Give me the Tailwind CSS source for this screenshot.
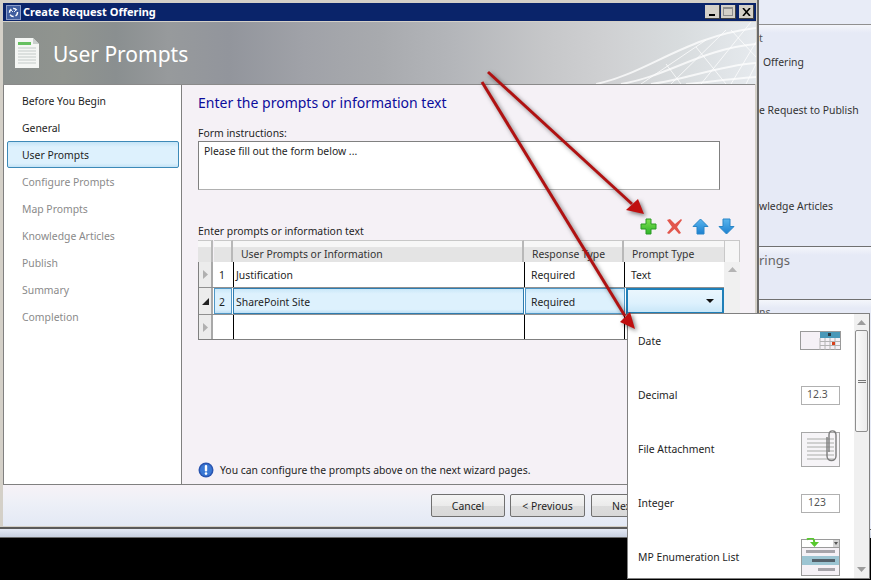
<!DOCTYPE html>
<html lang="en">
<head>
<meta charset="UTF-8">
<title>Create Request Offering</title>
<script src="https://cdn.jsdelivr.net/npm/@tailwindcss/browser@4"></script>
</head>
<body class="bg-black">
<div class="relative w-[871px] h-[580px] overflow-hidden bg-black font-['Noto_Sans',sans-serif] text-[10.4px] text-[#1e1e1e]">

  <div class="flex h-[538px]">
    <div class="w-[759px] h-[538px] shrink-0 flex flex-col border-r-2 border-b border-[#6a6a6a]">
      <!-- wizard window -->
      <div class="h-[529px] shrink-0 flex flex-col bg-[#d4d0c8] border-b-2 border-[#5a5a5a] pl-[3px] pt-[3px] pr-[1px] pb-[1px]">
        <div class="h-[18px] bg-[#0a246a] flex items-center justify-between pl-[3px] pr-[2px] shrink-0">
          <div class="flex items-center gap-[2px]">
            <svg width="15" height="15" viewBox="0 0 15 15"><rect x="0.5" y="0.5" width="14" height="14" fill="#3f5d9f" stroke="#8a9cc8"/><circle cx="7.5" cy="7.5" r="4" fill="none" stroke="#fff" stroke-width="1.5" stroke-dasharray="4 2"/><path d="M4 4l3 3M11 4l-3 3" stroke="#dfe6f5"/></svg>
            <span class="text-white font-bold text-[11px] leading-none mb-[2px]">Create Request Offering</span>
          </div>
          <div class="flex gap-px items-center">
            <div class="w-[15px] h-[14px] bg-[#d4d0c8] border-r border-b border-[#404040] flex items-end justify-center pb-[2px]"><div class="w-[6px] h-[2px] bg-black"></div></div>
            <div class="w-[15px] h-[14px] bg-[#d4d0c8] border-r border-b border-[#404040] flex items-center justify-center"><div class="w-[10px] h-[9px] border border-[#8e8e8e] border-t-2"></div></div>
            <div class="w-[15px] h-[14px] ml-[2px] bg-[#d4d0c8] border-r border-b border-[#404040] flex items-center justify-center">
              <svg width="9" height="8" viewBox="0 0 9 8"><path d="M1 0l7 8M8 0l-7 8" stroke="#000" stroke-width="1.6"/></svg>
            </div>
          </div>
        </div>

        <div class="relative h-[62px] mt-[1px] shrink-0 flex items-center overflow-hidden bg-[linear-gradient(90deg,#8b908e_0%,#90948f_8%,#8a8f90_15%,#979a9c_22%,#92959c_30%,#a0a2a8_40%,#a8aaae_50%,#b4b6ba_60%,#c6c7c9_72%,#cfd0d2_80%,#d8dcde_90%,#e6eaee_100%)]">
          <svg class="absolute right-0 top-0" width="160" height="62" viewBox="0 0 160 62" fill="none" stroke="#fff" stroke-opacity="0.75">
            <path d="M0 62C50 52 90 14 160 6" stroke-width="2"/>
            <path d="M25 62C70 55 105 27 160 22" stroke-width="2"/>
            <path d="M55 62C90 58 120 44 160 41" stroke-width="2"/>
            <path d="M90 62C115 60 140 56 160 55" stroke-width="2"/>
            <path d="M155 0L105 62M130 8L75 62M110 18L45 62M160 20L135 62M160 42L150 62"/>
            <path d="M100 25L130 62M70 42L85 62M135 8L160 35"/>
          </svg>
          <svg class="ml-[12px] mt-[-2px]" width="24" height="31" viewBox="0 0 24 31"><path d="M0 1H18L24 7V31H0Z" fill="#f4f6f4"/><path d="M18 1L24 7H18Z" fill="#c9cfcc"/><rect x="3" y="5" width="13" height="3" fill="#66c060"/><path d="M3 11H21M3 14H21M3 17H21M3 20H21M3 23H21M3 26H21" stroke="#c3cac8"/></svg>
          <span class="ml-[14px] mt-[2px] text-[21px] text-white leading-none">User Prompts</span>
        </div>

        <div class="flex h-[401px] shrink-0 border-t border-[#8a8a8a] mr-px">
          <!-- step list -->
          <div class="w-[178px] shrink-0 bg-white border-l border-b border-[#808080] pt-[2px] pl-[3px] pr-[2px]">
            <div class="h-[27px] flex items-center pl-[15px] pt-[2px]">Before You Begin</div>
            <div class="h-[27px] flex items-center pl-[15px] pt-[2px]">General</div>
            <div class="h-[27px] flex items-center pl-[14px] pt-[2px] rounded-[2px] border border-[#3d8ab8] bg-[linear-gradient(180deg,#c4e4f7_0%,#ddf1fd_20%,#ddf1fd_85%,#c3e3f6_100%)]">User Prompts</div>
            <div class="h-[27px] flex items-center pl-[15px] pt-[2px] text-[#8a8a8a]">Configure Prompts</div>
            <div class="h-[27px] flex items-center pl-[15px] pt-[2px] text-[#8a8a8a]">Map Prompts</div>
            <div class="h-[27px] flex items-center pl-[15px] pt-[2px] text-[#8a8a8a]">Knowledge Articles</div>
            <div class="h-[27px] flex items-center pl-[15px] pt-[2px] text-[#8a8a8a]">Publish</div>
            <div class="h-[27px] flex items-center pl-[15px] pt-[2px] text-[#8a8a8a]">Summary</div>
            <div class="h-[27px] flex items-center pl-[15px] pt-[2px] text-[#8a8a8a]">Completion</div>
          </div>

          <!-- content -->
          <div class="flex-1 bg-[#f5f1f6] border-l border-b border-[#808080] pl-[16px] flex flex-col">
            <h1 class="mt-[8px] text-[14px] leading-[20px] text-[#0c0c9c]">Enter the prompts or information text</h1>
            <div class="mt-[13px] leading-[14px]">Form instructions:</div>
            <div class="mt-[1px] w-[522px] h-[49px] border border-[#808080] border-b-[#b0b0b0] bg-white px-[5px] pt-[2px]">Please fill out the form below ...</div>

            <div class="mt-[27px] h-[23px] w-[542px] flex items-end justify-between">
              <span class="leading-[14px] mb-[2px]">Enter prompts or information text</span>
              <div class="flex items-center gap-[9px] pr-[5px] mb-[5px]">
                <svg width="17" height="17" viewBox="0 0 17 17"><defs><linearGradient id="g" x1="0" y1="0" x2="0" y2="1"><stop offset="0" stop-color="#7fe04f"/><stop offset="1" stop-color="#2eb52a"/></linearGradient></defs><path d="M6 1H11V6H16V11H11V16H6V11H1V6H6Z" fill="url(#g)" stroke="#2a9a24" stroke-linejoin="round"/></svg>
                <svg width="17" height="17" viewBox="0 0 17 17"><path d="M1 2L4 1L9 6L15 1L16 2L11 9L15 15L13 16L8.500 11L3 16L1 15L6 9Z" fill="#e2564c"/></svg>
                <svg width="17" height="17" viewBox="0 0 17 17"><defs><linearGradient id="b" x1="0" y1="0" x2="0" y2="1"><stop offset="0" stop-color="#5bb6ee"/><stop offset="1" stop-color="#1c80d0"/></linearGradient></defs><path d="M8.500 1L16 8.500H12V16H5V8.500H1Z" fill="url(#b)" stroke="#2a86c8" stroke-linejoin="round"/></svg>
                <svg width="17" height="17" viewBox="0 0 17 17"><path d="M8.500 16L16 8.500H12V1H5V8.500H1Z" fill="url(#b)" stroke="#2a86c8" stroke-linejoin="round"/></svg>
              </div>
            </div>

            <!-- grid -->
            <div class="w-[542px] h-[100px] flex flex-col relative">
              <div class="flex h-[22px] shrink-0">
                <div class="w-[15px] border-r-2 border-[#b8b8b8] bg-[linear-gradient(180deg,#f7f7f7_0%,#f7f7f7_30%,#e4e4e4_31%,#e4e4e4_100%)] border-t border-t-[#c8c8c8]"></div>
                <div class="w-[19px] ml-px border-r-2 border-[#b8b8b8] bg-[linear-gradient(180deg,#f7f7f7_0%,#f7f7f7_30%,#e4e4e4_31%,#e4e4e4_100%)] border-t border-t-[#c8c8c8]"></div>
                <div class="w-[291px] border-r-2 border-[#b8b8b8] bg-[linear-gradient(180deg,#f7f7f7_0%,#f7f7f7_30%,#e4e4e4_31%,#e4e4e4_100%)] border-t border-t-[#c8c8c8] pl-[8px] pt-[6px] leading-[14px] text-[#333]">User Prompts or Information</div>
                <div class="w-[100px] border-r-2 border-[#b8b8b8] bg-[linear-gradient(180deg,#f7f7f7_0%,#f7f7f7_30%,#e4e4e4_31%,#e4e4e4_100%)] border-t border-t-[#c8c8c8] pl-[8px] pt-[6px] leading-[14px] text-[#333]">Response Type</div>
                <div class="w-[100px] bg-[linear-gradient(180deg,#f7f7f7_0%,#f7f7f7_30%,#e4e4e4_31%,#e4e4e4_100%)] border-t border-t-[#c8c8c8] pl-[8px] pt-[6px] leading-[14px] text-[#333]">Prompt Type</div>
                <div class="flex-1 bg-[#f6f6f6] border-t border-x border-[#c8c8c8]"></div>
              </div>
              <div class="flex flex-1">
                <div class="w-[526px] border-l border-b border-[#808080] bg-white flex flex-col">
                  <div class="flex h-[26px] border-b border-[#909090]">
                    <div class="w-[14px] bg-[#ececec] border-r-2 border-[#a8a8a8] flex items-center justify-center"><svg width="5" height="9" viewBox="0 0 5 9"><path d="M0 0L5 4.500L0 9Z" fill="#b0b0b0"/></svg></div>
                    <div class="w-[19px] pl-[5px] pt-[2px] flex items-center ml-px">1</div>
                    <div class="w-[291px] border-l border-black pl-[2px] pt-[2px] flex items-center">Justification</div>
                    <div class="w-[100px] border-l border-black pl-[6px] pt-[2px] flex items-center">Required</div>
                    <div class="w-[100px] border-l border-black pl-[6px] pt-[2px] flex items-center">Text</div>
                  </div>
                  <div class="flex h-[27px] border-b border-[#909090]">
                    <div class="w-[14px] bg-[#ececec] border-r-2 border-[#a8a8a8] flex items-center justify-center"><svg width="7" height="7" viewBox="0 0 7 7"><path d="M7 0V7H0Z" fill="#222"/></svg></div>
                    <div class="w-[18px] ml-[1px] pl-[4px] pt-[3px] flex items-center border border-[#4f97c6] bg-[linear-gradient(180deg,#c9e7f8_0%,#ddf1fd_20%,#ddf1fd_85%,#bfe0f4_100%)]">2</div>
                    <div class="w-[291px] ml-px border border-[#2e7cb0] pl-[2px] pt-[3px] flex items-center bg-[linear-gradient(180deg,#c9e7f8_0%,#ddf1fd_20%,#ddf1fd_85%,#bfe0f4_100%)]">SharePoint Site</div>
                    <div class="w-[100px] ml-px border border-[#4f97c6] pl-[5px] pt-[3px] flex items-center bg-[linear-gradient(180deg,#c9e7f8_0%,#ddf1fd_20%,#ddf1fd_85%,#bfe0f4_100%)]">Required</div>
                    <div class="w-[98px] ml-px border-2 border-[#1f7fb8] flex items-center justify-end pr-[8px] bg-[linear-gradient(180deg,#eaf6fd_0%,#ddf1fd_60%,#c9e7f8_100%)]"><svg width="8" height="4" viewBox="0 0 8 4"><path d="M0 0H8L4 4Z" fill="#111"/></svg></div>
                  </div>
                  <div class="flex flex-1">
                    <div class="w-[14px] bg-[#ececec] border-r-2 border-[#a8a8a8] flex items-center justify-center"><svg width="5" height="9" viewBox="0 0 5 9"><path d="M0 0L5 4.500L0 9Z" fill="#b0b0b0"/></svg></div>
                    <div class="w-[19px] ml-px"></div>
                    <div class="w-[291px] border-l border-black"></div>
                    <div class="w-[100px] border-l border-black"></div>
                    <div class="w-[100px] border-l border-black"></div>
                  </div>
                </div>
                <div class="flex-1 bg-[#f0f0f0] flex justify-center pt-[5px]"><svg width="9" height="5" viewBox="0 0 9 5"><path d="M0 5L4.500 0L9 5Z" fill="#b4b4b4"/></svg></div>
              </div>
            </div>

            <div class="mt-auto mb-[5px] flex items-center gap-[6px]">
              <svg width="16" height="16" viewBox="0 0 16 16"><circle cx="8" cy="8" r="7.500" fill="#2a55b0"/><circle cx="8" cy="8" r="6" fill="#3a78d4"/><rect x="6.800" y="3" width="2.400" height="6.500" rx="1" fill="#fff"/><circle cx="8" cy="11.600" r="1.300" fill="#fff"/></svg>
              <span class="mt-[2px]">You can configure the prompts above on the next wizard pages.</span>
            </div>
          </div>
        </div>

        <!-- footer -->
        <div class="flex-1 flex items-start justify-end gap-[5px] pt-[9px] pr-[91px] bg-[linear-gradient(180deg,#f6f2f7_0%,#eef0f7_40%,#e3e9f5_100%)]">
          <div class="w-[74px] h-[23px] pt-[2px] border border-[#707070] rounded-[2px] flex items-center justify-center bg-[linear-gradient(180deg,#f4f4f4_0%,#ebebeb_50%,#dcdcdc_51%,#d8d8d8_100%)]">Cancel</div>
          <div class="w-[75px] h-[23px] pt-[2px] mr-px border border-[#707070] rounded-[2px] flex items-center justify-center bg-[linear-gradient(180deg,#f4f4f4_0%,#ebebeb_50%,#dcdcdc_51%,#d8d8d8_100%)]">&lt; Previous</div>
          <div class="w-[74px] h-[23px] pt-[2px] pl-[20px] border border-[#707070] rounded-[2px] flex items-center bg-[linear-gradient(180deg,#f4f4f4_0%,#ebebeb_50%,#dcdcdc_51%,#d8d8d8_100%)]">Nex</div>
        </div>
      </div>
      <!-- strip of the application below the wizard -->
      <div class="flex-1 bg-[linear-gradient(180deg,#e4e9f4_0%,#c8d0e0_100%)]"></div>
    </div>

    <!-- application behind the wizard -->
    <div class="flex-1 bg-[#e6eaf6] flex flex-col overflow-hidden text-[#333]">
      <div class="h-[25px] border-b border-[#909090] bg-[#e8ecf7]"></div>
      <div class="h-[222px] border-b border-[#707070] bg-[linear-gradient(180deg,#f4f6fb_0px,#e6eaf6_8px)]">
        <div class="pt-[6px] leading-[14px] text-[#555]">t</div>
        <div class="pl-[4px] mt-[10px] leading-[14px]">Offering</div>
        <div class="mt-[34px] leading-[14px] whitespace-nowrap">e Request to Publish</div>
        <div class="mt-[82px] leading-[14px] whitespace-nowrap">wledge Articles</div>
      </div>
      <div class="h-[53px] border-b border-[#707070] bg-[linear-gradient(180deg,#f4f6fb_0px,#e6eaf6_8px)] pt-[4px] text-[13px] leading-[18px] text-[#666]">rings</div>
      <div class="flex-1 bg-[linear-gradient(180deg,#f4f6fb_0px,#e6eaf6_8px)] pt-[5px] leading-[14px] text-[#555]">ns</div>
      <div class="h-[9px] bg-[linear-gradient(180deg,#e4e9f4_0%,#c8d0e0_100%)] border-t border-[#5a5a5a]"></div>
    </div>
  </div>

  <!-- prompt type dropdown -->
  <div class="absolute left-[627px] top-[313px] w-[243px] h-[266px] bg-white border border-[#808080] flex">
    <div class="w-[226px] flex flex-col">
      <div class="h-[54px] shrink-0 flex items-center justify-between pl-[10px] pr-[13px]">
        <span class="mt-[2px]">Date</span>
        <svg width="41" height="20" viewBox="0 0 41 20"><rect x="0.500" y="0.500" width="40" height="18" fill="#f5f1f6" stroke="#9a9a9a"/><rect x="20" y="1" width="20" height="6" fill="#4a98b8"/><path d="M20 7V19M25 7V19M30 7V19M35 7V19M20 10.500H40M20 14.500H40" stroke="#b4b4b4"/><rect x="28" y="2" width="3" height="3" fill="#2c3a44"/><rect x="32" y="11" width="3" height="3" fill="#d8421c"/></svg>
      </div>
      <div class="h-[54px] shrink-0 flex items-center justify-between pl-[10px] pr-[14px]">
        <span class="mt-[2px]">Decimal</span>
        <div class="w-[39px] h-[19px] border border-[#b0b0b0] pl-[5px] flex items-center text-[#555]">12.3</div>
      </div>
      <div class="h-[54px] shrink-0 flex items-center justify-between pl-[10px] pr-[14px]">
        <span class="mt-[2px]">File Attachment</span>
        <svg width="39" height="38" viewBox="0 0 39 38"><rect x="0.500" y="2.500" width="38" height="34" fill="#f6f4f7" stroke="#a8a8a8"/><path d="M6 9H33M6 13H33M6 17H33M6 21H33M6 25H33M6 29H33" stroke="#c4c4c4" stroke-width="1.400"/><path d="M26 7V26C26 32 35 32 35 26V5C35 -0.500 28 -0.500 28 5V22" fill="none" stroke="#7c7c7c" stroke-width="1.400"/></svg>
      </div>
      <div class="h-[54px] shrink-0 flex items-center justify-between pl-[10px] pr-[14px]">
        <span class="mt-[2px]">Integer</span>
        <div class="w-[39px] h-[19px] border border-[#b0b0b0] pl-[6px] flex items-center text-[#555]">123</div>
      </div>
      <div class="h-[54px] shrink-0 flex items-center justify-between pl-[10px] pr-[14px]">
        <span class="mt-[2px]">MP Enumeration List</span>
        <svg width="39" height="38" viewBox="0 0 39 38"><rect x="0.500" y="1.500" width="38" height="36" fill="#f5f1f6" stroke="#9a9a9a"/><rect x="1" y="2" width="31" height="7" fill="#fff"/><rect x="32" y="2" width="6" height="7" fill="#d4d4d4"/><path d="M33 4H37L35 7Z" fill="#555"/><path d="M1 9.500H38" stroke="#9a9a9a"/><rect x="5" y="12" width="29" height="3" fill="#a6a4aa"/><rect x="1" y="18" width="37" height="9" fill="#9cc4d2"/><rect x="11" y="21" width="23" height="3" fill="#54606a"/><rect x="17" y="30" width="17" height="3" fill="#a6a4aa"/><path d="M6 1.500C10 -1 14 0 13 5" fill="none" stroke="#58c82e" stroke-width="2"/><path d="M9 4H18L13.500 9Z" fill="#58c82e"/></svg>
      </div>
    </div>
    <div class="w-[15px] bg-[#f0f0f0] flex flex-col items-center justify-between pt-[6px] pb-[6px]">
      <div class="flex flex-col items-center w-full">
        <svg width="9" height="5" viewBox="0 0 9 5"><path d="M0 5L4.500 0L9 5Z" fill="#9c9c9c"/></svg>
        <div class="mt-[5px] w-[13px] h-[102px] rounded-[2px] border border-[#8e8e8e] bg-[linear-gradient(90deg,#fafafa,#ececec)] flex flex-col items-center justify-center gap-[1px]">
          <div class="w-[8px] h-px bg-[#777]"></div><div class="w-[8px] h-px bg-[#777]"></div>
        </div>
      </div>
      <svg width="9" height="5" viewBox="0 0 9 5"><path d="M0 0H9L4.500 5Z" fill="#9c9c9c"/></svg>
    </div>
  </div>

  <!-- callout arrows -->
  <svg class="absolute inset-0 pointer-events-none drop-shadow-[2px_2px_2px_rgba(0,0,0,0.5)]" width="871" height="580" viewBox="0 0 871 580" fill="none">
    <path d="M488 72L632 204" stroke="#b01212" stroke-width="3"/>
    <path d="M644 214L626 210L638 199Z" fill="#c01010"/>
    <path d="M482 82L625 316" stroke="#b01212" stroke-width="3"/>
    <path d="M635 329L620 322L630 312Z" fill="#c01010"/>
  </svg>
</div>
</body>
</html>
